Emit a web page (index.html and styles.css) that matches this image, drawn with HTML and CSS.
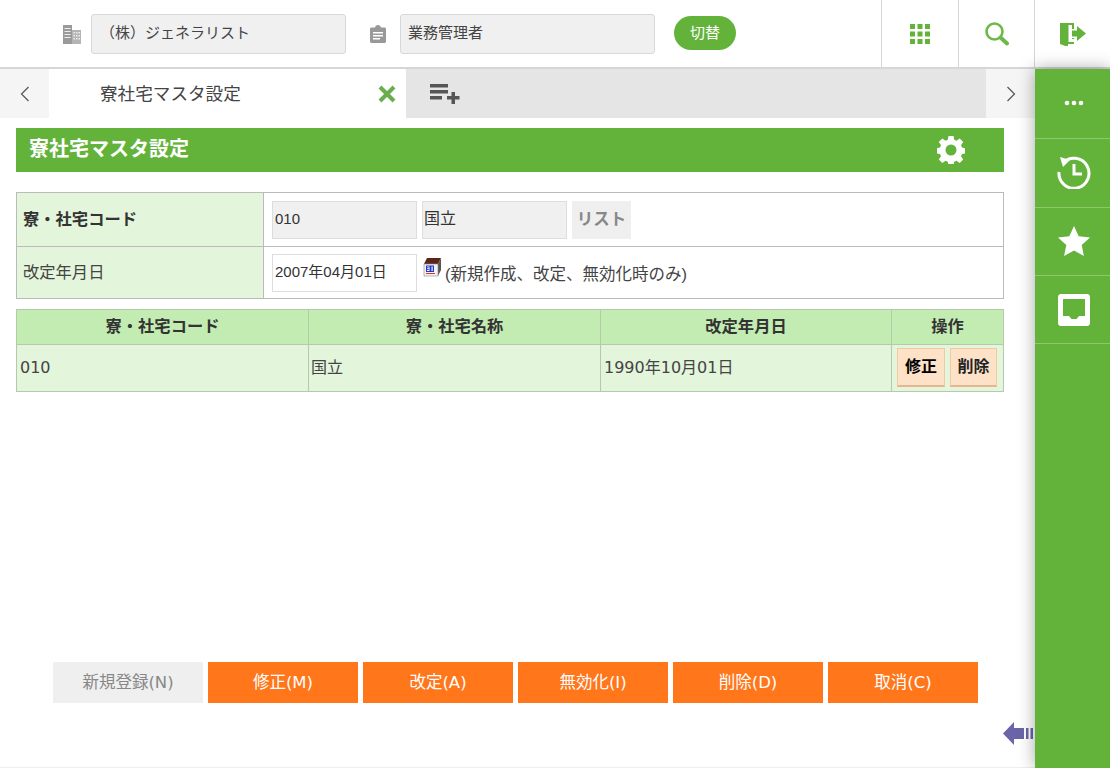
FILE: index.html
```html
<!DOCTYPE html>
<html lang="ja">
<head>
<meta charset="utf-8">
<title>寮社宅マスタ設定</title>
<link rel="stylesheet" href="styles.css">
</head>
<body>
<header class="topbar">
  <div class="topbar-fields">
    <svg class="field-icon building" viewBox="0 0 18 19" width="18" height="19"><path fill="#9a9a9a" d="M0 0h9v19H0z"/><path fill="#b4b4b4" d="M9 5h9v14H9z"/><path fill="#eee" d="M1.500 3h6v1h-6zM1.500 6h6v1h-6zM1.500 9h6v1h-6zM1.500 12h6v1h-6zM10.500 7h1.500v1.500h-1.500zM13 7h1.500v1.500H13zM15.500 7H17v1.500h-1.500zM10.500 10h1.500v1.500h-1.500zM13 10h1.500v1.500H13zM15.500 10H17v1.500h-1.500zM10.500 13h1.500v1.500h-1.500zM13 13h1.500v1.500H13zM15.500 13H17v1.500h-1.500z"/></svg>
    <div class="field company">（株）ジェネラリスト</div>
    <svg class="field-icon clip" viewBox="0 0 16 18" width="16" height="18"><path fill="#999" d="M1.500 2.500H5C5.300 1 6.500 0 8 0s2.700 1 3 2.500h3.500c.8 0 1.500.7 1.500 1.500v12.500c0 .8-.7 1.500-1.500 1.500h-13C.7 18 0 17.300 0 16.500V4c0-.8.7-1.500 1.500-1.500z"/><path fill="#fff" d="M3 7h10v1.500H3zM3 10h10v1.500H3zM3 13h7v1.500H3z"/></svg>
    <div class="field role">業務管理者</div>
    <button class="switch">切替</button>
  </div>
  <div class="top-cell">
    <svg viewBox="0 0 20 20" width="20" height="20"><path fill="#63b33b" d="M0 0h5v5H0zM7.500 0h5v5h-5zM15 0h5v5h-5zM0 7.500h5v5H0zM7.500 7.500h5v5h-5zM15 7.500h5v5h-5zM0 15h5v5H0zM7.500 15h5v5h-5zM15 15h5v5h-5z"/></svg>
  </div>
  <div class="top-cell">
    <svg viewBox="0 0 24 24" width="24" height="24"><circle cx="9.500" cy="9.500" r="8" fill="none" stroke="#6eb84a" stroke-width="2.600"/><path d="M15.500 15.500l6.500 6" stroke="#6eb84a" stroke-width="4" stroke-linecap="round"/></svg>
  </div>
  <div class="top-cell last">
    <svg viewBox="0 0 26 24" width="26" height="24"><path fill="#63b33b" fill-rule="evenodd" d="M0 1h14v6h-2V3H8.500v17H14v-3h-2v-1h2v6H8v3l-8-3z"/><path fill="#63b33b" d="M12 8.500h5V4l9 7.500-9 7.500v-4.500h-5z"/></svg>
  </div>
</header>

<div class="layout">
  <main class="main">
    <nav class="tabs">
      <button class="tab-arrow"><svg viewBox="0 0 10 16" width="10" height="16"><path d="M8.500 1L1.500 8l7 7" fill="none" stroke="#555" stroke-width="1.200"/></svg></button>
      <div class="tab-active">
        <span class="tab-title">寮社宅マスタ設定</span>
        <svg class="tab-close" viewBox="0 0 18 18" width="18" height="18"><path d="M2 2l14 14M16 2L2 16" stroke="#6aad4c" stroke-width="4"/></svg>
      </div>
      <div class="tab-rest">
        <svg viewBox="0 0 30 20" width="30" height="20"><path fill="#555" d="M0 0h18v3.500H0zM0 6h18v3.500H0zM0 12h12v3.500H0zM17 12h4.500V8H25v4h4.500v3.500H25V20h-3.500v-4.500H17z"/></svg>
      </div>
      <button class="tab-arrow"><svg viewBox="0 0 10 16" width="10" height="16"><path d="M1.500 1l7 7-7 7" fill="none" stroke="#555" stroke-width="1.200"/></svg></button>
    </nav>

    <div class="content">
      <div class="title-bar">
        <h1>寮社宅マスタ設定</h1>
        <svg class="gear" viewBox="0 0 28 28" width="28" height="28"><path fill="#fff" fill-rule="evenodd" d="M11.500 0h5l.7 3.800 2.300 1 3.200-2.200 3.500 3.500-2.200 3.200 1 2.300 3.800.7v5l-3.800.7-1 2.300 2.200 3.200-3.500 3.500-3.200-2.200-2.300 1-.7 3.700h-5l-.7-3.700-2.300-1-3.200 2.200-3.500-3.500 2.200-3.200-1-2.300-3.800-.7v-5l3.800-.7 1-2.300-2.200-3.200 3.500-3.500 3.200 2.200 2.300-1zM14 8.500a5.500 5.500 0 1 0 0 11 5.500 5.500 0 0 0 0-11z"/></svg>
      </div>

      <table class="form-table">
        <tr class="row-code">
          <th class="strong">寮・社宅コード</th>
          <td>
            <div class="cell-row">
              <span class="box box-off num">010</span>
              <span class="box box-off">国立</span>
              <button class="list-btn">リスト</button>
            </div>
          </td>
        </tr>
        <tr class="row-date">
          <th>改定年月日</th>
          <td>
            <div class="cell-row">
              <span class="box box-on num">2007年04月01日</span>
              <svg class="cal" viewBox="0 0 18 19" width="18" height="19"><path fill="#5e2418" d="M4 0h14l-3 6H1z"/><path fill="#555" d="M15 6l3-6v12l-3 6z"/><path fill="#f1f1f8" stroke="#888" stroke-width=".6" d="M1 6h14v12H1z"/><path fill="#2438c4" d="M3 7.500h8V14H3z"/><path fill="#d8342c" d="M3 15h9v1H3z"/><path fill="#fff" d="M4 8.500h2.500v.8H4zM4 10.300h2.500v.8H4zM4 12.100h2.500v.8H4zM5.700 8.500h.8v4.400h-.8zM8.500 8.500h1.200v4.400H8.500z"/></svg>
              <span class="note">(新規作成、改定、無効化時のみ)</span>
            </div>
          </td>
        </tr>
      </table>

      <table class="list-table">
        <colgroup>
          <col class="c1"><col class="c2"><col class="c3"><col class="c4">
        </colgroup>
        <thead>
          <tr><th>寮・社宅コード</th><th>寮・社宅名称</th><th>改定年月日</th><th>操作</th></tr>
        </thead>
        <tbody>
          <tr>
            <td class="num-wide code">010</td>
            <td class="name">国立</td>
            <td class="num-wide date">1990年10月01日</td>
            <td class="ops"><button class="op strong-op">修正</button><button class="op">削除</button></td>
          </tr>
        </tbody>
      </table>

      <div class="actions">
        <button class="action disabled">新規登録(N)</button>
        <button class="action">修正(M)</button>
        <button class="action">改定(A)</button>
        <button class="action">無効化(I)</button>
        <button class="action">削除(D)</button>
        <button class="action">取消(C)</button>
      </div>
    </div>

    <svg class="collapse" viewBox="0 0 31 25" width="31" height="25"><path fill="#6a65a8" d="M0 12.500L11 1v6h10v11H11v6z"/><path fill="#6a65a8" d="M23 7h2.500v11H23zM27.500 7H30v11h-2.500z"/></svg>
  </main>

  <aside class="side">
    <div class="side-item first">
      <svg viewBox="0 0 20 6" width="20" height="6"><circle cx="3" cy="3" r="2.300" fill="#fff"/><circle cx="10" cy="3" r="2.300" fill="#fff"/><circle cx="17" cy="3" r="2.300" fill="#fff"/></svg>
    </div>
    <div class="side-item second">
      <svg viewBox="0 0 34 34" width="34" height="34"><path d="M6 8A15 15 0 1 1 2 17" fill="none" stroke="#fff" stroke-width="3"/><path fill="#fff" d="M3 2l10 3-7 7z"/><path d="M17 9v10h8" fill="none" stroke="#fff" stroke-width="3"/></svg>
    </div>
    <div class="side-item">
      <svg viewBox="0 0 32 30" width="32" height="30"><path fill="#fff" d="M16 0l4.700 10.200 11.300 1.300-8.300 7.600 2.200 10.900-9.900-5.500-9.900 5.500 2.200-10.900L0 11.500l11.300-1.300z"/></svg>
    </div>
    <div class="side-item inbox">
      <svg viewBox="0 0 32 32" width="32" height="32"><path fill="#fff" fill-rule="evenodd" d="M3 0h26c1.700 0 3 1.300 3 3v26c0 1.700-1.300 3-3 3H3c-1.700 0-3-1.300-3-3V3c0-1.700 1.300-3 3-3zM5 5v17h6l2.500 3h5l2.500-3h6V5z"/></svg>
    </div>
  </aside>
</div>
</body>
</html>
```

FILE: styles.css
```css
* { box-sizing: border-box; }
html, body { margin: 0; padding: 0; height: 768px; overflow: hidden; background: #fff; }
body { font-family: "Liberation Sans", "Noto Sans CJK JP", sans-serif; font-size: 16px; color: #333; }
button { font-family: inherit; border: 0; padding: 0; cursor: pointer; }

.topbar { display: flex; height: 69px; border-bottom: 2px solid #d6d6d6; background: #fff; }
.topbar-fields { width: 881px; flex: none; display: flex; align-items: center; padding: 1px 0 0 63px; }
.field { height: 40px; width: 255px; background: #f0f0f0; border: 1px solid #d8d8d8; border-radius: 3px; font-size: 15px; line-height: 36px; color: #444; }
.company { padding-left: 8px; margin-left: 10px; }
.role { padding-left: 7px; margin-left: 14px; }
.clip { margin-left: 24px; }
.switch { margin: 0 0 2px 19px; width: 62px; height: 34px; padding-bottom: 3px; border-radius: 17px; background: #63b33b; color: #fff; font-size: 15px; }
.top-cell { width: 77px; flex: none; display: flex; align-items: center; justify-content: center; border-left: 1px solid #d6d6d6; }
.top-cell:nth-child(n+3) { width: 76px; }
.top-cell.last { padding-left: 1px; }

.layout { display: flex; height: 699px; }
.main { position: relative; width: 1035px; border-bottom: 1px solid #eee; }
.tabs { display: flex; height: 49px; }
.tab-arrow { width: 49px; background: #f5f5f5; display: flex; align-items: center; justify-content: center; }
.tab-active { width: 357px; display: flex; align-items: center; justify-content: space-between; padding: 0 10px 0 51px; font-size: 17.600px; color: #444; background: #fff; }
.tab-title { padding-bottom: 2px; }
.tab-rest { flex: 1; background: #e5e5e5; display: flex; align-items: center; padding: 0 0 0 24px; }

.content { padding: 10px 31px 0 16px; }
.title-bar { height: 44px; background: #63b33b; display: flex; align-items: center; justify-content: space-between; padding: 0 39px 0 13px; }
.title-bar h1 { margin: 0; padding-bottom: 2px; font-size: 20px; line-height: 1; font-weight: 700; color: #fff; }

.form-table { width: 988px; margin-top: 20px; border-collapse: collapse; table-layout: fixed; }
.form-table th, .form-table td { border: 1px solid #bbb; }
.form-table th { width: 247px; background: #e3f5db; text-align: left; padding: 0 0 4px 6px; font-weight: 400; font-size: 16.300px; color: #444; }
.form-table th.strong { font-weight: 700; color: #333; }
.form-table td { padding: 0 0 0 8px; }
.row-code { height: 54px; }
.row-date { height: 52px; }
.cell-row { display: flex; align-items: center; }
.box { display: block; width: 145px; height: 38px; line-height: 34px; padding-left: 1px; font-size: 16px; color: #333; margin-right: 5px; }
.box.num { font-size: 15px; padding-left: 2px; }
.box-off { background: #f0f0f0; border: 1px solid #ddd; }
.box-on { background: #fff; border: 1px solid #ddd; }
.list-btn { width: 59px; height: 38px; padding-bottom: 3px; background: #efefef; color: #888; font-weight: 700; font-size: 16.500px; }
.cal { margin: -10px 4px 0 1px; }
.note { font-size: 16.500px; color: #444; }

.list-table { width: 987px; margin-top: 10px; border-collapse: collapse; table-layout: fixed; }
.c1 { width: 292px; } .c2 { width: 292px; } .c3 { width: 291px; } .c4 { width: 112px; }
.list-table th, .list-table td { border: 1px solid #b5c9ad; }
.list-table th { height: 35px; background: #c3ecb2; font-size: 16.300px; font-weight: 700; color: #333; padding: 0 0 4px; }
.list-table td { height: 47px; background: #e3f5db; font-size: 16px; color: #444; padding: 0 0 5px 3px; }
.list-table td.name { padding-left: 2px; }
.list-table td.num-wide { font-family: "DejaVu Sans", "Noto Sans CJK JP", sans-serif; font-size: 16px; }
.list-table td.code { padding-bottom: 1px; }
.list-table td.ops { padding: 0 0 2px 5px; white-space: nowrap; }
.op { width: 47px; height: 39px; margin-right: 5px; padding-bottom: 3px; vertical-align: middle; background: #fde2c8; border: 1px solid #f3c9a3; border-bottom: 2px solid #e8b58c; color: #222; font-size: 16px; font-weight: 700; }
.op.strong-op { width: 48px; color: #000; }

.actions { display: flex; gap: 5px; margin: 270px 0 0 37px; }
.action { width: 150px; height: 41px; padding-bottom: 3px; background: #ff761b; color: #fff; font-size: 16.500px; font-family: "DejaVu Sans", "Noto Sans CJK JP", sans-serif; }
.action.disabled { background: #efefef; color: #888; }

.collapse { position: absolute; left: 1003px; top: 652px; }

.side { width: 75px; height: 699px; background: #63b33b; box-shadow: 0 0 16px rgba(0,0,0,.35); position: relative; }
.side-item { height: 68px; display: flex; align-items: center; justify-content: center; padding: 0 0 2px 2px; border-bottom: 1px solid #8cc86f; }
.side-item.first { height: 70px; }
.side-item.second { height: 69px; }
.side-item.inbox { padding-bottom: 0; }
```
